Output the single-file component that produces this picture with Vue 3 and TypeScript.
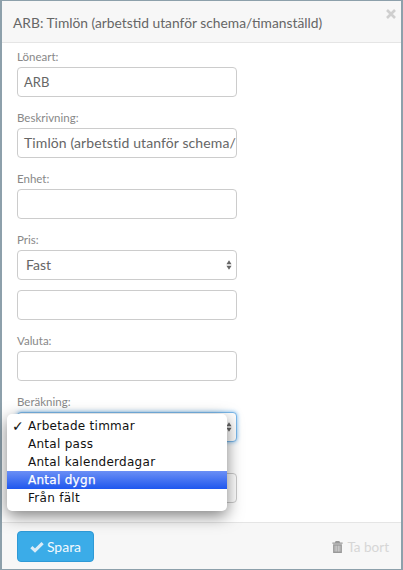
<script setup lang="ts">
const options: string[] = ['Arbetade timmar', 'Antal pass', 'Antal kalenderdagar', 'Antal dygn', 'Från fält']
const selected = 0
const highlighted = 3
</script>

<template>
  <div class="frame">
    <div class="modal">
      <header class="head">
        <h1 class="title">ARB: Timlön (arbetstid utanför schema/timanställd)</h1>
        <svg class="close" viewBox="0 0 12 12" aria-hidden="true"><path d="M2 2 L10 10 M10 2 L2 10" /></svg>
      </header>

      <main class="body">
        <div class="group">
          <div class="label">Löneart:</div>
          <div class="control code">ARB</div>
        </div>
        <div class="group">
          <div class="label">Beskrivning:</div>
          <div class="control wide">Timlön (arbetstid utanför schema/</div>
        </div>
        <div class="group">
          <div class="label">Enhet:</div>
          <div class="control"></div>
        </div>
        <div class="group">
          <div class="label">Pris:</div>
          <div class="control select">
            Fast
            <svg class="arrows" viewBox="0 0 7 12" aria-hidden="true"><path d="M3.5 0.5 L6.5 5 H0.5 Z M3.5 11.5 L0.5 7 H6.5 Z" /></svg>
          </div>
        </div>
        <div class="group">
          <div class="control"></div>
        </div>
        <div class="group">
          <div class="label">Valuta:</div>
          <div class="control"></div>
        </div>
        <div class="group">
          <div class="label">Beräkning:</div>
          <div class="control select focus">
            <svg class="arrows" viewBox="0 0 7 12" aria-hidden="true"><path d="M3.5 0.5 L6.5 5 H0.5 Z M3.5 11.5 L0.5 7 H6.5 Z" /></svg>
            <ul class="menu">
              <li v-for="(o, i) in options" :key="o" class="item" :class="{ active: i === highlighted }">
                <span class="tick">{{ i === selected ? '✓' : '' }}</span>{{ o }}
              </li>
            </ul>
          </div>
        </div>
        <div class="group">
          <div class="label"></div>
          <div class="control"></div>
        </div>
      </main>

      <footer class="foot">
        <button class="save" type="button">
          <svg class="check" viewBox="0 0 14 12" aria-hidden="true"><path d="M1.4 6.2 L5 9.6 L12.6 2.2" /></svg>
          Spara
        </button>
        <span class="remove">
          <svg class="trash" viewBox="0 0 12 14" aria-hidden="true">
            <path d="M4 0.5 H8 L8.8 2 H11.6 V3.4 H0.4 V2 H3.2 Z M1.2 4 H10.8 V13.5 H1.2 Z" />
            <path class="slots" d="M3.4 5.5 V12 M5.2 5.5 V12 M6.9 5.5 V12 M8.6 5.5 V12" />
          </svg>
          Ta bort
        </span>
      </footer>
    </div>
  </div>
</template>

<style>
html, body { margin: 0; background: #8da0ab; }
</style>

<style scoped>
.frame {
  width: 403px;
  height: 570px;
  box-sizing: border-box;
  padding: 1px 2px 1px 2px;
  background: #8da0ab;
  font-family: Lato, "Open Sans", sans-serif;
}
.modal {
  height: 100%;
  background: #fff;
  display: flex;
  flex-direction: column;
}
.head {
  height: 42px;
  box-sizing: border-box;
  background: #f7f7f7;
  border-bottom: 1px solid #e5e5e5;
  padding: 12px 11px 0;
  position: relative;
  flex: none;
}
.title {
  margin: 0;
  font-size: 13.8px;
  font-weight: 400;
  line-height: 20px;
  color: #666;
  white-space: nowrap;
}
.close {
  position: absolute;
  top: 7px;
  right: 4px;
  width: 12px;
  height: 12px;
}
.close path { stroke: #cfcfcf; stroke-width: 2.6; fill: none; }
.body {
  flex: 1;
  padding: 3px 164px 0 15px;
}
.group { margin-bottom: 10px; }
.label {
  height: 21px;
  line-height: 22px;
  font-size: 11.5px;
  color: #888;
}
.control {
  position: relative;
  height: 30px;
  box-sizing: border-box;
  border: 1px solid #ccc;
  border-radius: 4px;
  padding: 0 0 0 6px;
  line-height: 28px;
  font-size: 14px;
  color: #666;
  white-space: nowrap;
  background: #fff;
}
.code { font-size: 13px; }
.wide { letter-spacing: 0.1px; }
.select { padding-left: 8px; }
.focus {
  border-color: #7ab8ea;
  box-shadow: 0 0 4px rgba(82, 168, 236, 0.8);
}
.arrows {
  position: absolute;
  right: 4px;
  top: 8px;
  width: 6px;
  height: 12px;
}
.arrows path { fill: #666; }
.menu {
  position: absolute;
  left: -11px;
  top: 1px;
  width: 220px;
  margin: 0;
  padding: 3px 0 4px;
  list-style: none;
  background: #fff;
  border-radius: 5px;
  box-shadow: 0 5px 16px rgba(0, 0, 0, 0.5);
  z-index: 2;
  font-family: "DejaVu Sans", sans-serif;
  font-size: 12px;
  letter-spacing: 0.28px;
  color: #111;
}
.item {
  height: 18px;
  line-height: 18px;
  display: flex;
}
.tick {
  width: 21px;
  box-sizing: border-box;
  padding-left: 5px;
  font-size: 14px;
  font-weight: 700;
}
.active {
  background: linear-gradient(#6b8ff5, #1f57ee);
  color: #fff;
  -webkit-text-stroke: 0.25px #fff;
}
.foot {
  height: 47px;
  box-sizing: border-box;
  flex: none;
  background: #f7f7f7;
  border-top: 1px solid #e5e5e5;
  padding: 8px 12px 0 15px;
  display: flex;
  align-items: flex-start;
  justify-content: space-between;
}
.save {
  width: 77px;
  height: 31px;
  padding: 0;
  background: #3bace8;
  border: 1px solid #2f9ad6;
  border-radius: 4px;
  color: #f2f9fd;
  font-family: inherit;
  font-size: 14px;
  display: flex;
  align-items: center;
  justify-content: center;
  gap: 3px;
}
.check { width: 14px; height: 12px; }
.check path { stroke: #dcecf7; stroke-width: 3.2; fill: none; }
.remove {
  display: flex;
  align-items: center;
  gap: 4px;
  height: 31px;
  font-size: 13.5px;
  color: #d6d6d6;
}
.trash { width: 11px; height: 14px; }
.trash path { fill: #999; }
.trash .slots { fill: none; stroke: #e8e8e8; stroke-width: 0.8; }
</style>
